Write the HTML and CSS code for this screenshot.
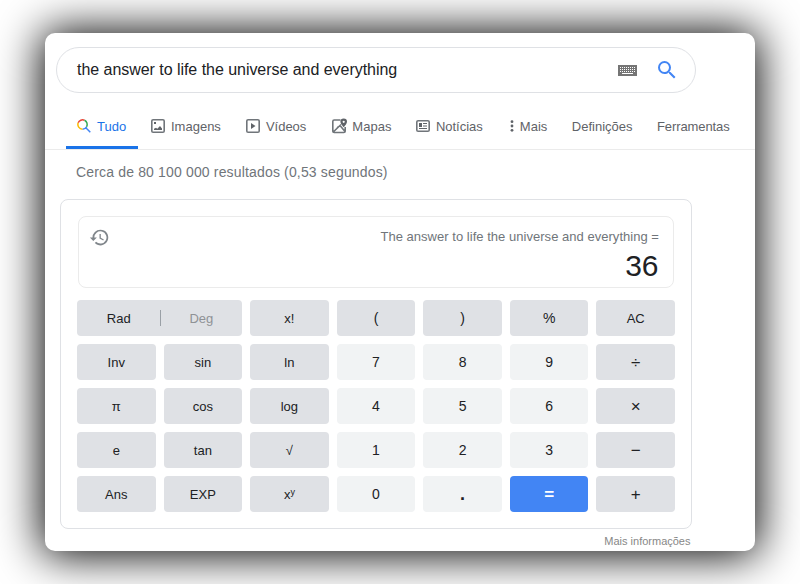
FILE: index.html
```html
<!DOCTYPE html>
<html lang="pt">
<head>
<meta charset="utf-8">
<title>Calculadora</title>
<link rel="stylesheet" href="styles.css">
</head>
<body>
<main class="window">
  <div class="search">
    <span class="query">the answer to life the universe and everything</span>
    <svg class="keyboard" width="19" height="11" viewBox="0 0 19 11"><path fill="#757575" d="M0 0h19v11H0z"/><path stroke="#fff" stroke-dasharray="1 1" d="M2 2.5h15M2 4.5h15M2 6.5h15"/><path stroke="#fff" d="M4 8.5h11"/></svg>
    <svg class="lens" width="24" height="24" viewBox="0 0 24 24"><path fill="#4285f4" d="M15.5 14h-.79l-.28-.27A6.47 6.47 0 0 0 16 9.5 6.5 6.5 0 1 0 9.5 16c1.61 0 3.09-.59 4.23-1.57l.27.28v.79l5 4.99L20.49 19l-4.99-5zm-6 0C7.01 14 5 11.99 5 9.5S7.01 5 9.5 5 14 7.01 14 9.5 11.99 14 9.5 14z"/></svg>
  </div>
  <nav class="tabs">
    <a class="tab tab-active"><svg width="14" height="14" viewBox="0 0 14 14" fill="none" stroke-width="1.5"><path stroke="#ea4335" d="M1.2 3.8A4.7 4.7 0 0 1 7.5 1.3"/><path stroke="#34a853" d="M7.5 1.3A4.7 4.7 0 0 1 9.6 7.8"/><path stroke="#4285f4" d="M9.6 7.8A4.7 4.7 0 0 1 5.5 10.2M8.8 8.8l4.5 4.5"/><path stroke="#fbbc04" d="M5.5 10.2A4.7 4.7 0 0 1 1.2 3.8"/></svg>Tudo</a>
    <a class="tab images"><svg width="14" height="14" viewBox="0 0 14 14"><rect x=".8" y=".8" width="12.4" height="12.4" rx="1.3" fill="none" stroke="#70757a" stroke-width="1.6"/><path fill="#5f6368" d="M3 3h2v2H3zM3 11V9.7l2-1 1.3 1L9 7l2 2.5V11z"/></svg>Imagens</a>
    <a class="tab videos"><svg width="14" height="14" viewBox="0 0 14 14"><rect x=".8" y=".8" width="12.4" height="12.4" rx="1.3" fill="none" stroke="#70757a" stroke-width="1.6"/><path fill="#5f6368" d="M5 4l4.5 3L5 10z"/></svg>Vídeos</a>
    <a class="tab maps"><svg width="16" height="16" viewBox="0 0 16 16"><path fill="none" stroke="#70757a" stroke-width="1.6" d="M8.5 2H2.2Q.8 2 .8 3.4v9.8q0 1.3 1.4 1.3h9.6q1.4 0 1.4-1.3V9M1.5 13.8L9 6.5M5 10.2l1.5-1.8M8 7.6l5 6"/><path fill="#5f6368" fill-rule="evenodd" d="M11.7.5a3.3 3.3 0 0 0-3.3 3.3c0 2.2 3.3 5.5 3.3 5.5S15 6 15 3.8A3.3 3.3 0 0 0 11.7.5zm0 2.2a1.1 1.1 0 1 1 0 2.2 1.1 1.1 0 0 1 0-2.2z"/></svg>Mapas</a>
    <a class="tab news"><svg width="14" height="14" viewBox="0 0 14 14"><rect x=".8" y="1.8" width="12.4" height="10.4" rx="1.3" fill="none" stroke="#70757a" stroke-width="1.6"/><path fill="#5f6368" d="M3 4h3v4H3zM7 4h4v1H7zM7 6.5h4v1H7zM3 9h8v1H3z"/></svg>Notícias</a>
    <a class="tab more"><svg width="4" height="12" viewBox="0 0 4 12"><g fill="#5f6368"><circle cx="2" cy="1.7" r="1.4"/><circle cx="2" cy="6" r="1.4"/><circle cx="2" cy="10.3" r="1.4"/></g></svg>Mais</a>
    <a class="tab settings">Definições</a>
    <a class="tab tools">Ferramentas</a>
  </nav>
  <p class="stats">Cerca de 80 100 000 resultados (0,53 segundos)</p>
  <section class="card">
    <div class="display">
      <svg class="history" width="21" height="21" viewBox="0 0 24 24"><path fill="#80868b" d="M13 3a9 9 0 0 0-9 9H1l3.89 3.89.07.14L9 12H6a7 7 0 1 1 2.06 4.94l-1.42 1.42A9 9 0 1 0 13 3zm-1 5v5l4.28 2.54.72-1.21-3.5-2.08V8z"/></svg>
      <div class="readout">
        <div class="expression">The answer to life the universe and everything =</div>
        <div class="result">36</div>
      </div>
    </div>
    <div class="keys">
      <div class="key mode"><span class="rad">Rad</span><i class="divider"></i><span class="deg">Deg</span></div>
      <div class="key">x!</div><div class="key paren">(</div><div class="key paren">)</div><div class="key paren">%</div><div class="key">AC</div>
      <div class="key">Inv</div><div class="key">sin</div><div class="key">ln</div><div class="key num">7</div><div class="key num">8</div><div class="key num">9</div><div class="key op">÷</div>
      <div class="key">π</div><div class="key">cos</div><div class="key">log</div><div class="key num">4</div><div class="key num">5</div><div class="key num">6</div><div class="key op">×</div>
      <div class="key">e</div><div class="key">tan</div><div class="key">√</div><div class="key num">1</div><div class="key num">2</div><div class="key num">3</div><div class="key op">−</div>
      <div class="key">Ans</div><div class="key">EXP</div><div class="key"><span>x<sup>y</sup></span></div><div class="key num">0</div><div class="key num dot">.</div><div class="key equals">=</div><div class="key op">+</div>
    </div>
  </section>
  <div class="info">Mais informações</div>
</main>
</body>
</html>
```
FILE: styles.css
```css
* { box-sizing: border-box; }
body { margin: 0; height: 584px; overflow: hidden; padding: 33px 45px; background: #fff; font-family: "Liberation Sans", Arial, sans-serif; }
svg { display: block; flex: none; }
.window { width: 710px; height: 518px; border-radius: 10px; background: #fff; box-shadow: 0 1px 45px 3px #000; padding-top: 14px; }
.search { width: 640px; height: 46px; margin-left: 11px; border: 1px solid #dfe1e5; border-radius: 23px; display: flex; align-items: center; padding: 0 16px 0 20px; font-size: 16px; color: #202124; }
.query { flex: 1; padding-bottom: 1px; letter-spacing: -.04px; }
.lens { margin-left: 18px; margin-bottom: 1px; }
.tabs { height: 57px; border-bottom: 1px solid #ebebeb; display: flex; color: #5f6368; font-size: 13px; padding-left: 21px; }
.tab { height: 56px; padding-top: 13px; display: flex; align-items: center; gap: 6px; white-space: nowrap; flex: none; padding-bottom: 2px; }
.tab svg { margin-bottom: 2px; }
.tab-active { width: 72px; padding-left: 11px; border-bottom: 3px solid #1a73e8; padding-bottom: 0; color: #1a73e8; }
.tab-active svg { margin-bottom: 0; }
.images { margin-left: 13px; }
.videos { margin-left: 25px; }
.maps { margin-left: 26px; gap: 4px; }
.news { margin-left: 24.5px; }
.more { margin-left: 27px; }
.settings { margin-left: 24.5px; }
.tools { margin-left: 24.5px; letter-spacing: -.1px; }
.stats { margin: 13px 0 0 31px; font-size: 14px; line-height: 18px; letter-spacing: .16px; color: #70757a; }
.card { margin: 18px 0 0 15px; width: 632px; height: 330px; border: 1px solid #dfe1e5; border-radius: 8px; padding: 16px; }
.display { width: 596px; height: 72px; margin-left: 1px; border: 1px solid #ebebeb; border-radius: 8px; display: flex; justify-content: space-between; padding: 11px 14px 0 10px; }
.history { margin-top: -1px; }
.readout { text-align: right; }
.expression { font-size: 13px; line-height: 18px; letter-spacing: .03px; color: #70757a; }
.result { font-size: 30px; line-height: 40px; color: #202124; padding-right: .5px; }
.keys { width: 598px; margin-top: 12px; display: grid; grid-template-columns: repeat(7, minmax(0, 1fr)); grid-auto-rows: 36px; gap: 8px; }
.key { background: #dfe1e5; border-radius: 4px; color: #202124; font-size: 13px; display: flex; align-items: center; justify-content: center; }
.mode { grid-column: span 2; padding-left: 1px; }
.rad, .deg { flex: 1; text-align: center; }
.deg { color: #8f9296; }
.divider { width: 1px; height: 16px; background: #9aa0a6; }
.num { background: #f1f3f4; font-size: 14px; }
.paren { font-size: 14px; }
.op { font-size: 17px; padding-top: 1px; }
.dot { font-size: 18px; font-weight: bold; }
.equals { background: #4285f4; color: #fff; font-size: 17px; font-weight: bold; padding-top: 2px; }
sup { font-size: 9px; line-height: 0; vertical-align: 4px; }
.info { width: 645.5px; margin-top: 5px; text-align: right; color: #878787; font-size: 11px; line-height: 14px; }
```
